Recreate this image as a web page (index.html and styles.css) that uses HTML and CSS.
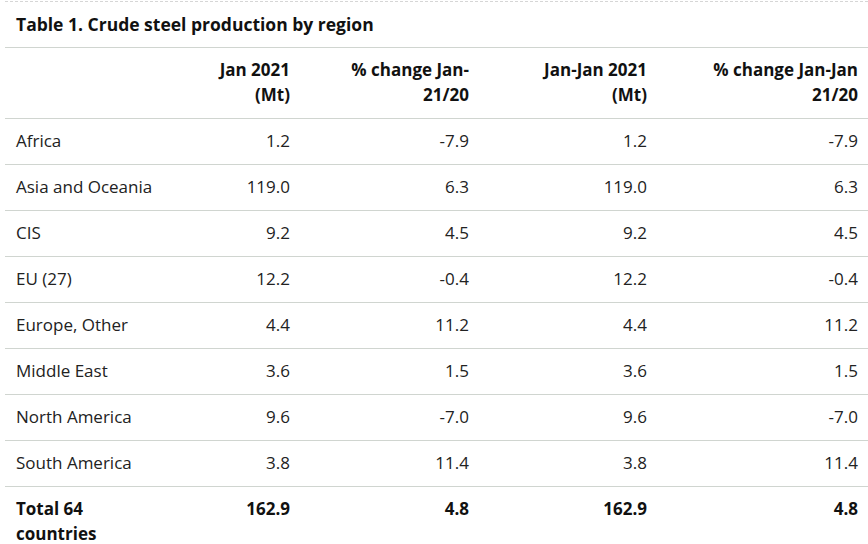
FILE: index.html
```html
<!DOCTYPE html>
<html lang="en">
<head>
<meta charset="utf-8">
<title>Crude steel production by region</title>
<link rel="stylesheet" href="styles.css">
</head>
<body>
<div class="wrap">
  <div class="caption">Table 1. Crude steel production by region</div>
  <table class="data">
    <colgroup>
      <col class="c0"><col class="c1"><col class="c2"><col class="c3"><col class="c4">
    </colgroup>
    <thead>
      <tr>
        <th class="label"></th>
        <th>Jan 2021 (Mt)</th>
        <th>% change Jan-21/20</th>
        <th>Jan-Jan 2021 (Mt)</th>
        <th>% change Jan-Jan 21/20</th>
      </tr>
    </thead>
    <tbody>
      <tr><td class="label">Africa</td><td>1.2</td><td>-7.9</td><td>1.2</td><td>-7.9</td></tr>
      <tr><td class="label">Asia and Oceania</td><td>119.0</td><td>6.3</td><td>119.0</td><td>6.3</td></tr>
      <tr><td class="label">CIS</td><td>9.2</td><td>4.5</td><td>9.2</td><td>4.5</td></tr>
      <tr><td class="label">EU (27)</td><td>12.2</td><td>-0.4</td><td>12.2</td><td>-0.4</td></tr>
      <tr><td class="label">Europe, Other</td><td>4.4</td><td>11.2</td><td>4.4</td><td>11.2</td></tr>
      <tr><td class="label">Middle East</td><td>3.6</td><td>1.5</td><td>3.6</td><td>1.5</td></tr>
      <tr><td class="label">North America</td><td>9.6</td><td>-7.0</td><td>9.6</td><td>-7.0</td></tr>
      <tr><td class="label">South America</td><td>3.8</td><td>11.4</td><td>3.8</td><td>11.4</td></tr>
      <tr class="total"><td class="label">Total 64 countries</td><td>162.9</td><td>4.8</td><td>162.9</td><td>4.8</td></tr>
    </tbody>
  </table>
</div>
</body>
</html>
```
FILE: styles.css
```css
html, body {
  margin: 0;
  padding: 0;
  background: #ffffff;
}

body {
  font-family: "Open Sans", "Liberation Sans", sans-serif;
  font-size: 17px;
  color: #222222;
}

.wrap {
  margin: 1px 0 0 5px;
  border-top: 1px dashed #d6d6d6;
}

.caption {
  font-weight: 700;
  font-size: 17.5px;
  line-height: 25px;
  color: #111111;
  padding: 10px 11px 10px 11px;
  border-bottom: 1px solid #d0d5d0;
}

.data {
  width: 863px;
  border-collapse: collapse;
  table-layout: fixed;
}

.c0 { width: 155px; }
.c1 { width: 140px; }
.c2 { width: 179px; }
.c3 { width: 178px; }
.c4 { width: 211px; }

.data th,
.data td {
  padding: 9px 10px 11px 40px;
  line-height: 25px;
  text-align: right;
  vertical-align: top;
  border-bottom: 1px solid #d0d5d0;
}

.data th {
  font-weight: 700;
  color: #111111;
}

.data .label {
  text-align: left;
  padding-left: 11px;
  padding-right: 2px;
}

.data .total td {
  font-weight: 700;
  color: #111111;
  border-bottom: none;
}
```
